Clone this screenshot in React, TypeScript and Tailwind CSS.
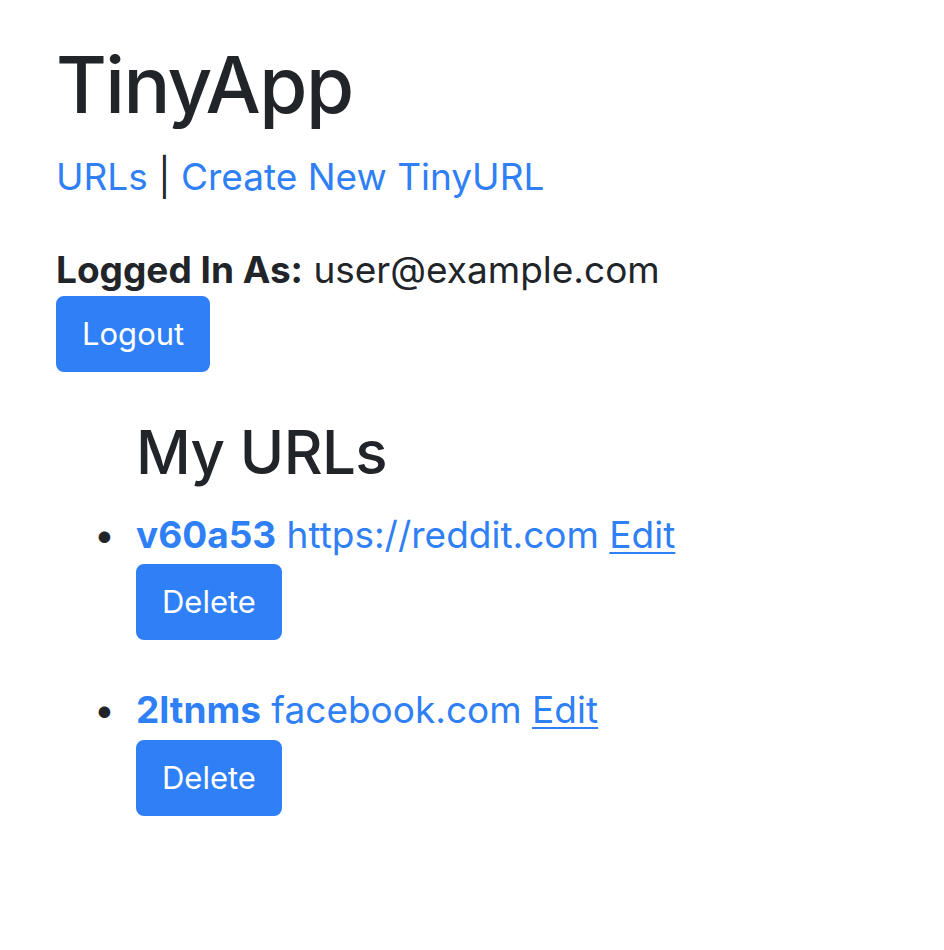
import React from "react";

const urls = [
  { id: "v60a53", long: "https://reddit.com" },
  { id: "2ltnms", long: "facebook.com" },
];

function BlueButton({ label }: { label: string }) {
  return (
    <button
      type="button"
      className="rounded-[8px] border-2 border-[#2f7ff6] bg-[#2f7ff6] px-[24px] py-[12px] text-[31px] leading-[48px] text-white"
    >
      {label}
    </button>
  );
}

export default function App() {
  return (
    <div className="min-h-screen bg-white pl-[56px] pt-[38px] font-['Inter','Helvetica_Neue',Arial,sans-serif] text-[37px] leading-[1.5] text-[#212529]">
      <h1 className="text-[78px] font-medium leading-[1.2] tracking-[-0.02em]">TinyApp</h1>

      <nav className="mt-[17px]">
        <a href="#" className="text-[#2f7ff6]">URLs</a> |{" "}
        <a href="#" className="text-[#2f7ff6]">Create New TinyURL</a>
      </nav>

      <div className="mt-[38px]">
        <p>
          <b className="font-bold">Logged In As:</b> user@example.com
        </p>
        <div className="-mt-[2px]">
          <BlueButton label="Logout" />
        </div>
      </div>

      <ul className="mt-[44px] pl-[80px]">
        <h2 className="mb-[19px] text-[60px] font-medium leading-[1.2] tracking-[-0.01em]">My URLs</h2>
        {urls.map((u) => (
          <li
            key={u.id}
            className="relative mb-[42px] before:absolute before:-left-[42px] before:top-0 before:text-[#212529] before:content-['•']"
          >
            <a href="#" className="text-[#2f7ff6]">
              <b className="font-bold">{u.id}</b> {u.long}
            </a>{" "}
            <a href="#" className="text-[#2f7ff6] underline decoration-2 underline-offset-[4px]">Edit</a>
            <div className="mt-[2px]">
              <BlueButton label="Delete" />
            </div>
          </li>
        ))}
      </ul>
    </div>
  );
}
